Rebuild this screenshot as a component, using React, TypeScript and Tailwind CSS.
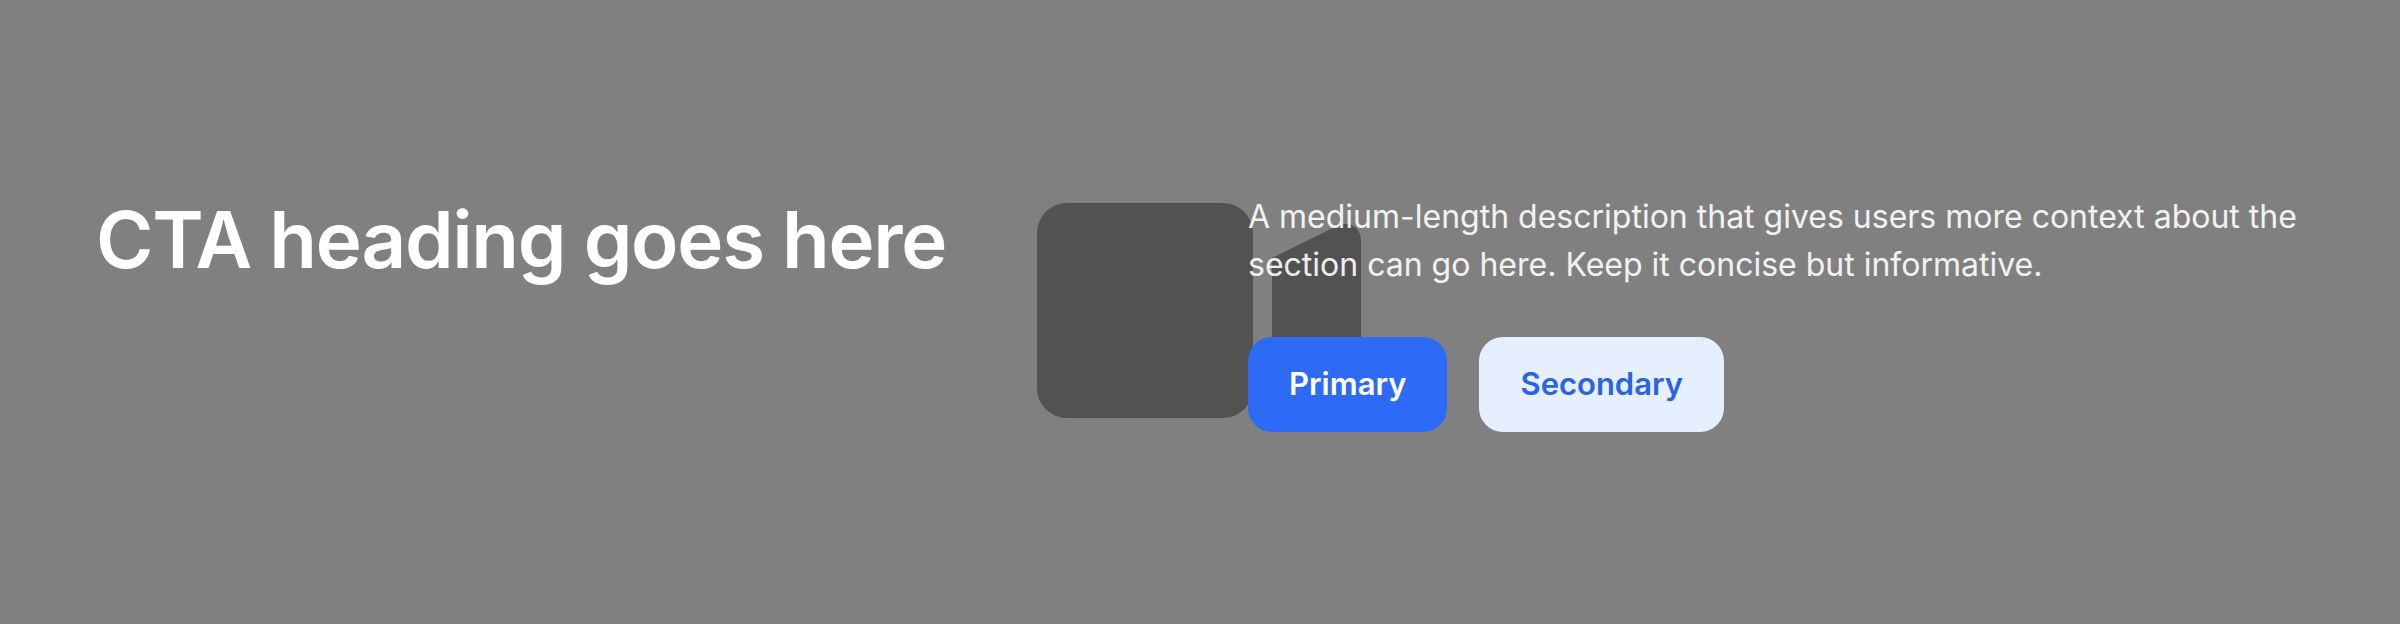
import React from "react";

export default function App() {
  return (
    <div className="relative w-full h-[624px] bg-[#808080] flex items-center overflow-hidden" style={{ fontFamily: "Inter, 'Noto Sans', sans-serif" }}>
      <svg
        className="absolute left-[1037px] top-[203px]"
        width="324"
        height="215"
        viewBox="0 0 324 215"
        aria-hidden="true"
      >
        <rect x="0" y="0" width="216" height="215" rx="30" fill="#525252" />
        <path
          d="M235 55 L300 23 C312 17 324 24 324 38 V177 C324 191 312 198 300 192 L235 160 Z"
          fill="#525252"
        />
      </svg>
      <div className="relative z-10 w-full px-24 grid grid-cols-2 gap-24 items-start">
        <h2 className="text-[78px] leading-[1.2] tracking-[-1.3px] font-semibold text-white">
          CTA heading goes here
        </h2>
        <div className="flex flex-col">
          <p className="text-[32px] leading-[48px] text-white/90">
            A medium-length description that gives users more context about the section can go here. Keep it concise but informative.
          </p>
          <div className="mt-12 flex gap-8">
            <button className="h-[95px] px-[41px] rounded-3xl bg-[#2d6af6] text-white text-[31px] font-semibold">
              Primary
            </button>
            <button className="h-[95px] px-[41px] rounded-3xl bg-[#e6effd] text-[#2b63e3] text-[31px] font-semibold">
              Secondary
            </button>
          </div>
        </div>
      </div>
    </div>
  );
}
